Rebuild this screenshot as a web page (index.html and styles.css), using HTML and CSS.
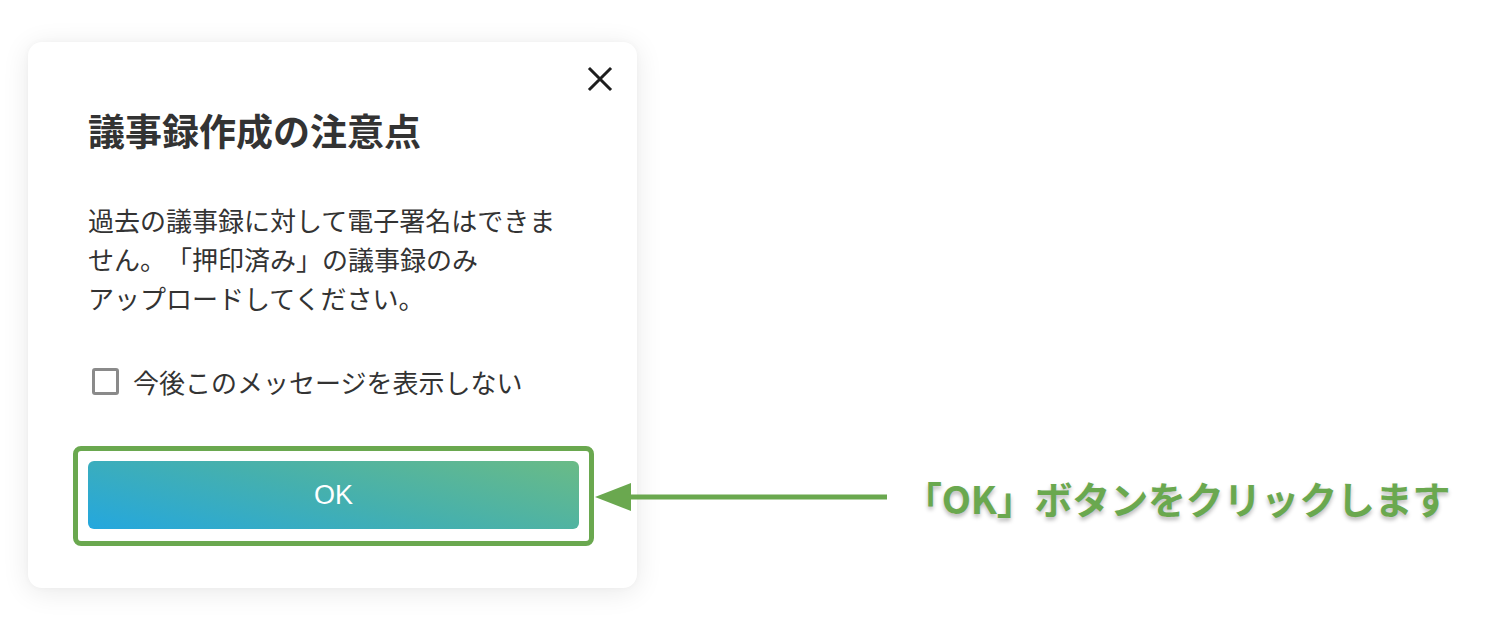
FILE: index.html
```html
<!DOCTYPE html>
<html lang="ja">
<head>
<meta charset="utf-8">
<title>議事録作成の注意点</title>
<link rel="stylesheet" href="styles.css">
</head>
<body>
<div class="stage">
  <div class="card">
    <button class="close" aria-label="閉じる">
      <svg width="26" height="26" viewBox="0 0 26 26"><path d="M3 3 L23 23 M23 3 L3 23" stroke="#1e1e1e" stroke-width="3" stroke-linecap="square" fill="none"/></svg>
    </button>
    <h1 class="title">議事録作成の注意点</h1>
    <p class="body">過去の議事録に対して電子署名はできま<br>せん。「押印済み」の議事録のみ<br>アップロードしてください。</p>
    <label class="check"><span class="box"></span><span class="label">今後このメッセージを表示しない</span></label>
    <div class="highlight">
      <button class="ok">OK</button>
    </div>
  </div>
  <div class="callout">
    <svg class="arrow" width="292" height="30" viewBox="0 0 292 30"><polygon points="0,15 36,1 36,29" fill="#6aa84f"/><rect x="30" y="12.5" width="262" height="5" fill="#6aa84f"/></svg>
    <span class="note">「OK」ボタンをクリックします</span>
  </div>
</div>
</body>
</html>
```

FILE: styles.css
```css
* { box-sizing: border-box; }
html, body { margin: 0; padding: 0; background: #fff; }
body {
  font-family: "Noto Sans CJK JP", "Noto Sans", sans-serif;
  color: #333;
  width: 1494px;
  height: 619px;
  overflow: hidden;
  text-spacing-trim: space-all;
}
.stage {
  position: relative;
  padding: 42px 0 0 28px;
}
.card {
  position: relative;
  width: 609px;
  background: #fff;
  border-radius: 14px;
  box-shadow: 0 4px 28px rgba(0, 0, 0, 0.09), 0 0 6px rgba(0,0,0,0.03);
  padding: 62px 59px 42px 60px;
}
.close {
  position: absolute;
  top: 24px;
  right: 24px;
  width: 26px;
  height: 26px;
  padding: 0;
  border: 0;
  background: none;
  display: flex;
}
.title {
  margin: 0;
  font-size: 37px;
  line-height: 52px;
  font-weight: 700;
  color: #333;
  letter-spacing: 0;
}
.body {
  margin: 44px 0 0;
  font-size: 26px;
  line-height: 39px;
  color: #333;
  text-spacing-trim: space-all;
}
.check {
  margin-top: 45px;
  display: flex;
  align-items: center;
  height: 39px;
}
.box {
  width: 27px;
  height: 27px;
  margin-left: 4px;
  border: 3px solid #8a8a8a;
  border-radius: 3px;
  flex: none;
}
.label {
  margin-left: 14px;
  font-size: 26px;
  line-height: 39px;
  color: #333;
}
.highlight {
  margin: 45px -16px 0 -15px;
  border: 5px solid #6aa84f;
  border-radius: 8px;
  padding: 10px 10px 12px;
}
.ok {
  display: block;
  width: 100%;
  height: 68px;
  border: 0;
  border-radius: 6px;
  background: linear-gradient(15deg, #24a7de 0%, #45b0ae 50%, #6abb86 100%);
  color: #fff;
  font-family: "Liberation Sans", Arial, sans-serif;
  font-size: 27px;
  font-weight: 400;
  padding: 0;
}
.callout {
  position: absolute;
  left: 595px;
  top: 467px;
  display: flex;
  align-items: center;
  height: 60px;
}
.arrow { flex: none; display: block; }
.note {
  margin-left: 17px;
  font-size: 38px;
  font-weight: 700;
  color: #6aa84f;
  letter-spacing: -0.2px;
  text-shadow: 0 3px 4px rgba(0, 0, 0, 0.28);
  white-space: nowrap;
  text-spacing-trim: space-all;
}
```
